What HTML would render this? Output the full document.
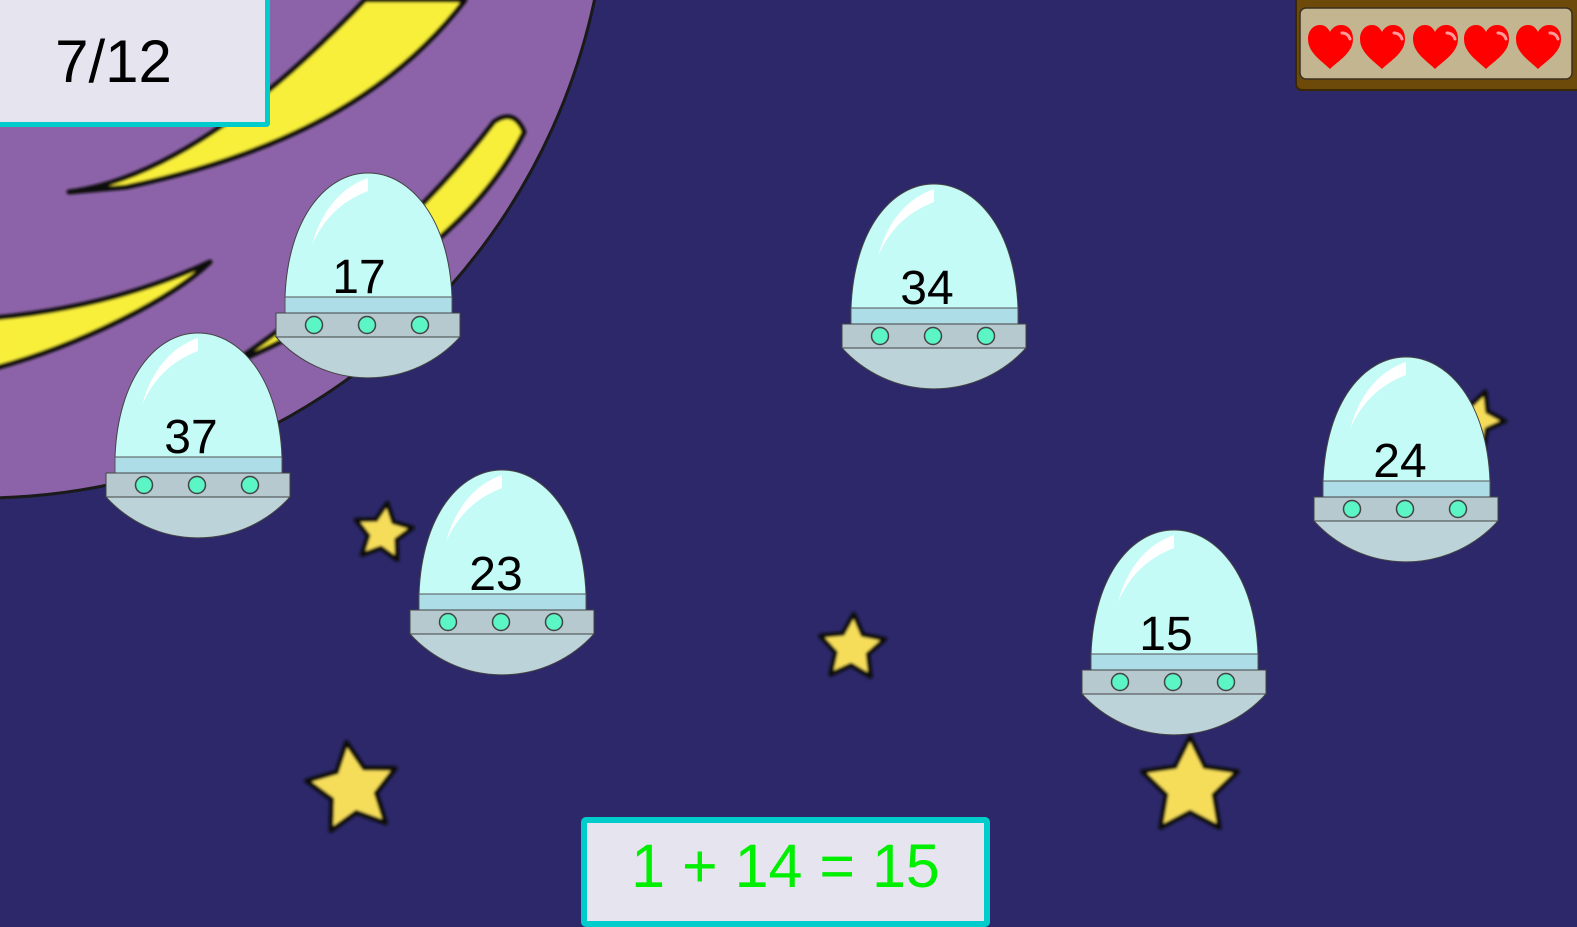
<!DOCTYPE html>
<html><head><meta charset="utf-8"><style>
html,body{margin:0;padding:0;width:1577px;height:921px;overflow:hidden;background:#2c2869;font-family:"Liberation Sans",Arial,sans-serif}
svg{position:absolute;left:0;top:0}
.box{position:absolute;background:#e6e5ef;box-sizing:border-box;text-align:center}
</style></head><body>
<svg width="1577" height="921" viewBox="0 0 1577 921">
<defs>
<filter id="bl" x="-20%" y="-20%" width="140%" height="140%"><feGaussianBlur stdDeviation="1.2"/></filter>
<path id="star" d="M0,-1 L0.294,-0.405 0.951,-0.309 0.476,0.155 0.588,0.809 0,0.5 -0.588,0.809 -0.476,0.155 -0.951,-0.309 -0.294,-0.405Z"/>
<g id="ufo">
<path d="M9,124 C12,45 50,0 92,0 C134,0 173,45 176,124 Z" fill="#c4fbf7" stroke="#444" stroke-width="1"/>
<path d="M36,72 C48,45 66,28 92,18 L92,5 C66,14 46,36 36,72Z" fill="#fff"/>
<rect x="9" y="124" width="167" height="16" fill="#addde6" stroke="#555" stroke-width="1"/>
<path d="M0,164 A124 124 0 0 0 184,164 Z" fill="#bcd3da" stroke="#444" stroke-width="1"/>
<rect x="0" y="140" width="184" height="24" fill="#b5c9cf" stroke="#444" stroke-width="1"/>
<circle cx="38" cy="152" r="8.5" fill="#5cf5c5" stroke="#444" stroke-width="1.5"/>
<circle cx="91" cy="152" r="8.5" fill="#5cf5c5" stroke="#444" stroke-width="1.5"/>
<circle cx="144" cy="152" r="8.5" fill="#5cf5c5" stroke="#444" stroke-width="1.5"/>
</g>
<path id="heart" d="M22,44 C14,36 0,28 0,14 C0,5 6,0 12,0 C17,0 20,3 22,7 C24,3 28,0 33,0 C40,0 45,5 45,14 C45,28 30,36 22,44Z"/>
</defs>
<circle cx="-20" cy="-130" r="628" fill="#8c63a8" stroke="#1a1a1a" stroke-width="3"/>
<g fill="#f8ef3a" stroke="#0d0d0d" stroke-width="5" filter="url(#bl)" stroke-linejoin="round">
<path d="M69,192 C160,180 260,110 365,0 L465,0 C400,85 300,150 126,187 Z"/>
<path d="M228,366 C300,320 420,220 494,122 Q514,108 524,132 C480,220 380,300 228,366Z"/>
<path d="M-5,318 C80,310 150,290 210,262 C170,300 80,345 -5,368 Z"/>
</g>
<g fill="#f5dd5a" stroke="#111" stroke-linejoin="round" filter="url(#bl)">
<use href="#star" transform="translate(383,533) rotate(8) scale(30)" style="stroke-width:0.15"/>
<use href="#star" transform="translate(852,648) rotate(3) scale(34)" style="stroke-width:0.13"/>
<use href="#star" transform="translate(353,789) rotate(-8) scale(47)" style="stroke-width:0.1"/>
<use href="#star" transform="translate(1190,787) rotate(0) scale(50)" style="stroke-width:0.09"/>
<use href="#star" transform="translate(1475,420) rotate(20) scale(30)" style="stroke-width:0.15"/>
</g>
<g font-family="Liberation Sans, Arial, sans-serif" font-size="48" fill="#000" text-anchor="middle">
<use href="#ufo" x="276" y="173"/><text x="359" y="293">17</text>
<use href="#ufo" x="106" y="333"/><text x="191" y="453">37</text>
<use href="#ufo" x="842" y="184"/><text x="927" y="304">34</text>
<use href="#ufo" x="410" y="470"/><text x="496" y="590">23</text>
<use href="#ufo" x="1082" y="530"/><text x="1166" y="650">15</text>
<use href="#ufo" x="1314" y="357"/><text x="1400" y="477">24</text>
</g>
<rect x="1296" y="-10" width="290" height="100" rx="6" fill="#6e4a0a" stroke="#3a2805" stroke-width="2"/>
<rect x="1300" y="8" width="272" height="71" rx="6" fill="#c2b590" stroke="#3a3020" stroke-width="1.5"/>
<g fill="#f00">
<use href="#heart" x="1308" y="25"/>
<use href="#heart" x="1360" y="25"/>
<use href="#heart" x="1413" y="25"/>
<use href="#heart" x="1464" y="25"/>
<use href="#heart" x="1516" y="25"/>
</g>
<g fill="none" stroke="#ff9a9a" stroke-width="3" stroke-linecap="round">
<path d="M1342,33 q6,0 8,6"/><path d="M1394,33 q6,0 8,6"/><path d="M1447,33 q6,0 8,6"/><path d="M1498,33 q6,0 8,6"/><path d="M1550,33 q6,0 8,6"/>
</g>
</svg>
<div class="box" style="left:0;top:0;width:270px;height:127px;border-right:5px solid #00cccc;border-bottom:5px solid #00cccc;border-bottom-right-radius:4px;font-size:60px;line-height:124px;padding-right:38px;color:#000">7/12</div>
<div class="box" style="left:581px;top:817px;width:409px;height:110px;border:6px solid #00cccc;border-radius:5px;font-size:61px;line-height:86px;color:#00ee00">1 + 14 = 15</div>
</body></html>
